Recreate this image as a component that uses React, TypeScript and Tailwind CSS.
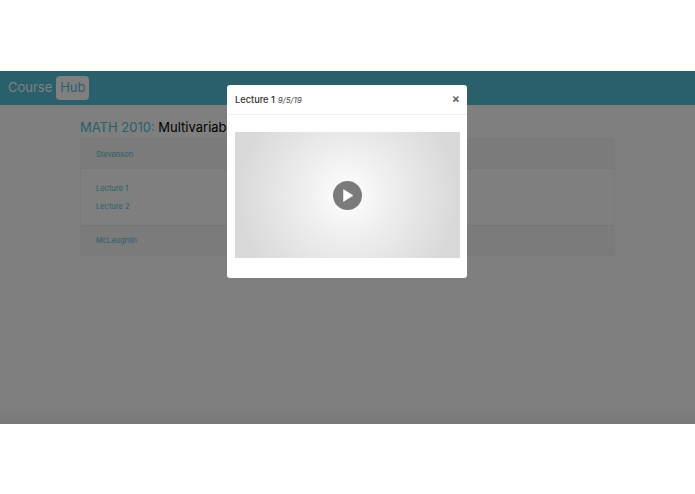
import React from 'react';

const font = { fontFamily: 'Inter, "Liberation Sans", sans-serif' };

function VideoModal() {
    return (
        <div className="absolute left-[227px] top-[14px] w-[240px] h-[193px] bg-white rounded-[3px] flex flex-col">
            <div className="h-[30px] shrink-0 flex items-center justify-between pl-2 pr-[7px] border-b border-[#eeeeee] text-[#333333]">
                <div className="flex items-baseline gap-[3px]">
                    <span className="text-[9.25px] font-medium">Lecture 1</span>
                    <span className="text-[8px] italic text-[#444444]">9/5/19</span>
                </div>
                <span className="text-[12px] font-bold leading-none text-[#666666] pb-[2px]">×</span>
            </div>
            <div className="px-2 pt-[17px]">
                <div className="h-[126px] w-[225px] flex items-center justify-center bg-[radial-gradient(circle_at_center,#ffffff_0%,#eeeeee_35%,#d9d9d9_85%)]">
                    <div className="w-[29px] h-[29px] rounded-full bg-[#7b7b7b] flex items-center justify-center">
                        <svg width="12" height="13" viewBox="0 0 12 13">
                            <path d="M1.5 0.5 L11 6.5 L1.5 12.5 Z" fill="#ffffff" stroke="#ffffff" strokeWidth="0.5" strokeLinejoin="round" />
                        </svg>
                    </div>
                </div>
            </div>
        </div>
    );
}

export default function App() {
    return (
        <div className="h-[494px] w-[695px] bg-white flex flex-col overflow-hidden" style={font}>
            <div className="h-[71px] shrink-0" />
            <div className="h-[353px] relative bg-white">
                {/* Navbar */}
                <div className="h-[34px] bg-[#54bed8] flex items-center pl-2">
                    <span className="text-[13px] text-white">Course</span>
                    <span className="ml-[4px] h-[24px] w-[33px] justify-center rounded-[4px] bg-white text-[#54bed8] text-[13px] flex items-center">Hub</span>
                </div>

                <div className="pl-[80px] w-[615px]">
                    <h1 className="mt-[12px] h-[21px] text-[13px] leading-[20px] whitespace-nowrap">
                        <span className="text-[#54bed8]">MATH 2010: </span>
                        <span className="text-black">Multivariable Calculus</span>
                    </h1>
                    <div className="rounded-[2px] text-[7.5px] leading-[10px] text-[#54bed8] border border-[#f3f3f3]">
                        <div className="h-[30px] pl-[15px] pt-[2px] flex items-center bg-[#f6f6f6] border-b border-[#efefef]">Stevenson</div>
                        <div className="h-[56px] pl-[15px] pt-[2px] flex flex-col justify-center gap-[8px]">
                            <div>Lecture 1</div>
                            <div>Lecture 2</div>
                        </div>
                        <div className="h-[30px] pl-[15px] flex items-center bg-[#f6f6f6] border-t border-[#efefef]">McLaughlin</div>
                    </div>
                </div>

                {/* Backdrop */}
                <div className="absolute inset-0 bg-[linear-gradient(to_bottom,rgba(0,0,0,0.5)_96%,rgba(0,0,0,0.53)_100%)]" />
                <VideoModal />
            </div>
        </div>
    );
}
